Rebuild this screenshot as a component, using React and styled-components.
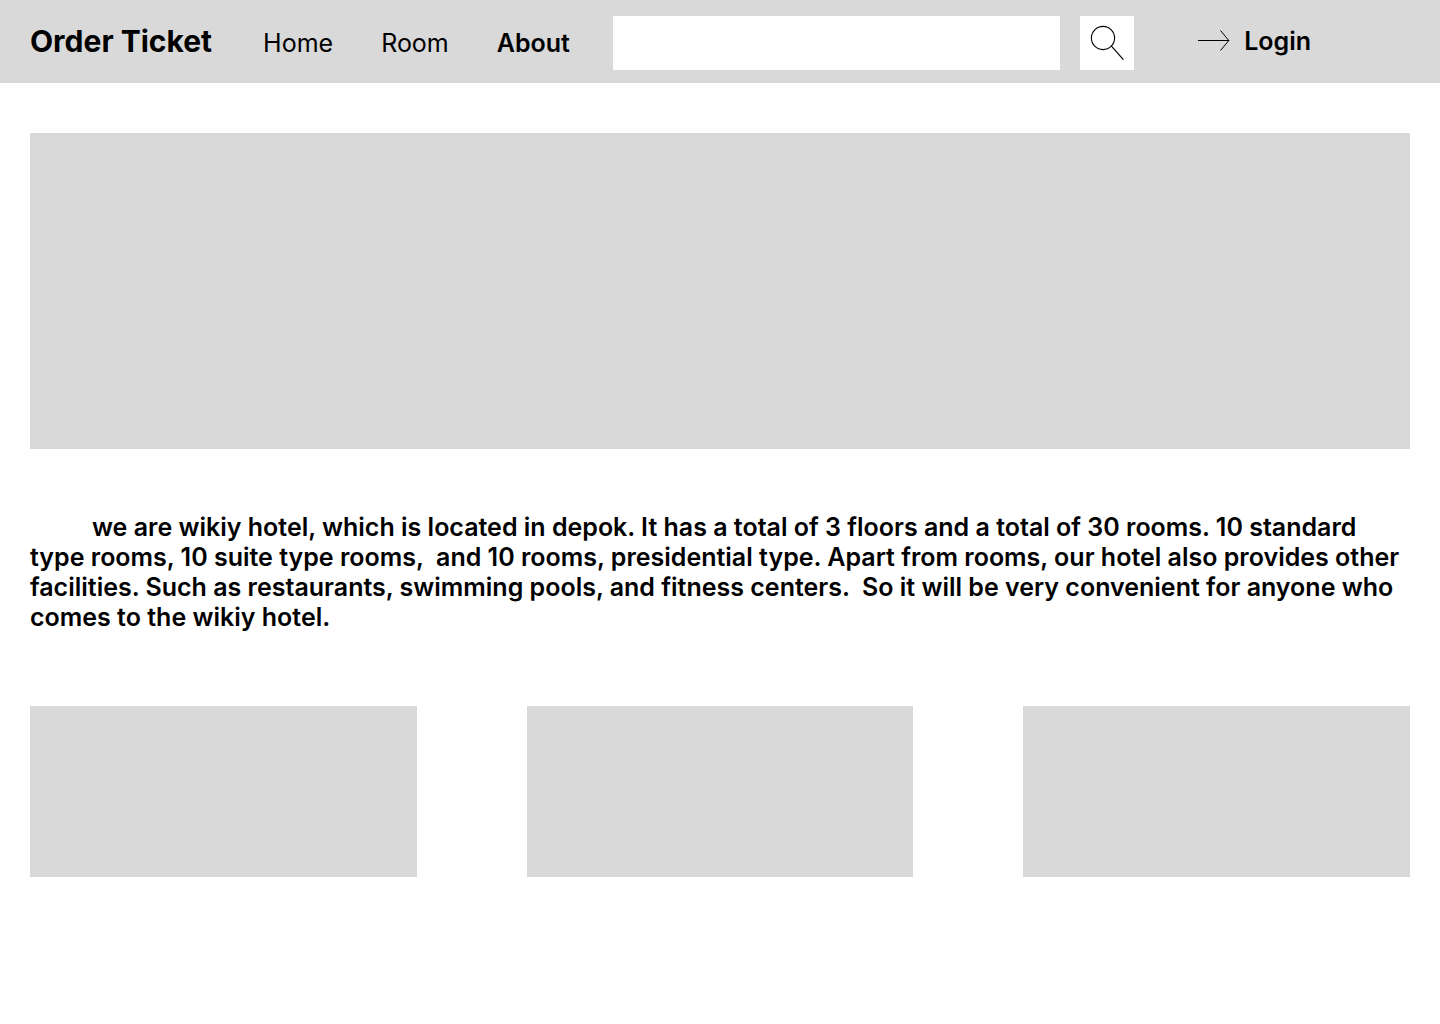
import React from "react";
import styled, { createGlobalStyle } from "styled-components";

const GlobalStyle = createGlobalStyle`
  *, *::before, *::after { box-sizing: border-box; }
  body {
    margin: 0;
    background: #fff;
    color: #000;
    font-family: Inter, "Liberation Sans", sans-serif;
  }
`;

const Header = styled.header`
  display: flex;
  align-items: center;
  height: 83px;
  padding: 3px 129px 0 30px;
  background: #d9d9d9;
`;

const Brand = styled.a`
  margin-right: 51px;
  padding-bottom: 4px;
  color: inherit;
  font-size: 30px;
  line-height: 36px;
  font-weight: 700;
  text-decoration: none;
  white-space: nowrap;
`;

const Nav = styled.nav`
  display: flex;
  gap: 48px;
  margin-right: 43px;
`;

const NavLink = styled.a`
  color: inherit;
  font-size: 25px;
  line-height: 30px;
  font-weight: ${({ $active }) => ($active ? 600 : 400)};
  text-decoration: none;
`;

const Search = styled.form`
  display: flex;
  flex: 1;
  gap: 20px;
  min-width: 0;
`;

const SearchInput = styled.input`
  flex: 1;
  min-width: 0;
  height: 54px;
  padding: 0 16px;
  border: 0;
  border-radius: 0;
  background: #fff;
  font: inherit;
  font-size: 25px;
`;

const SearchButton = styled.button`
  display: grid;
  place-items: center;
  width: 54px;
  height: 54px;
  padding: 0;
  border: 0;
  background: #fff;
  color: inherit;
  cursor: pointer;
`;

const Login = styled.a`
  display: flex;
  align-items: center;
  gap: 14px;
  margin-left: 64px;
  padding-bottom: 4px;
  color: inherit;
  font-size: 25px;
  line-height: 30px;
  font-weight: 600;
  text-decoration: none;
`;

const Main = styled.main`
  padding: 50px 30px;
`;

const Banner = styled.section`
  height: 316px;
  background: #d9d9d9;
`;

const Description = styled.p`
  margin: 63px 0 74px;
  font-size: 25px;
  line-height: 30px;
  font-weight: 600;
  text-indent: 62px;
  white-space: pre-wrap;
`;

const Gallery = styled.section`
  display: grid;
  grid-template-columns: repeat(3, 1fr);
  gap: 110px;
`;

const Tile = styled.div`
  height: 171px;
  background: #d9d9d9;
`;

const SearchIcon = () => (
  <svg width="34" height="36" viewBox="0 0 34 36" fill="none" stroke="currentColor" aria-hidden="true">
    <circle cx="13" cy="13" r="11.6" strokeWidth="1.1" />
    <path d="M21.2 20.8 33.4 34.6" strokeWidth="1.2" />
  </svg>
);

const ArrowIcon = () => (
  <svg width="32" height="22" viewBox="0 0 32 22" fill="none" stroke="currentColor" aria-hidden="true">
    <path d="M0 10.5H31M22.5 .5 30.8 10.5 22.5 20.5" />
  </svg>
);

export default function App() {
  return (
    <>
      <GlobalStyle />
      <Header>
        <Brand href="#">Order Ticket</Brand>
        <Nav aria-label="Main">
          <NavLink href="#home">Home</NavLink>
          <NavLink href="#room">Room</NavLink>
          <NavLink href="#about" $active aria-current="page">About</NavLink>
        </Nav>
        <Search role="search" onSubmit={(event) => event.preventDefault()}>
          <SearchInput type="search" aria-label="Search" />
          <SearchButton type="submit" aria-label="Search">
            <SearchIcon />
          </SearchButton>
        </Search>
        <Login href="#login">
          <ArrowIcon />
          Login
        </Login>
      </Header>
      <Main>
        <Banner aria-label="Banner" />
        <Description>
          {"we are wikiy hotel, which is located in depok. It has a total of 3 floors and a total of 30 rooms. 10 standard type rooms, 10 suite type rooms,  and 10 rooms, presidential type. Apart from rooms, our hotel also provides other facilities. Such as restaurants, swimming pools, and fitness centers.  So it will be very convenient for anyone who comes to the wikiy hotel."}
        </Description>
        <Gallery aria-label="Gallery">
          <Tile />
          <Tile />
          <Tile />
        </Gallery>
      </Main>
    </>
  );
}
